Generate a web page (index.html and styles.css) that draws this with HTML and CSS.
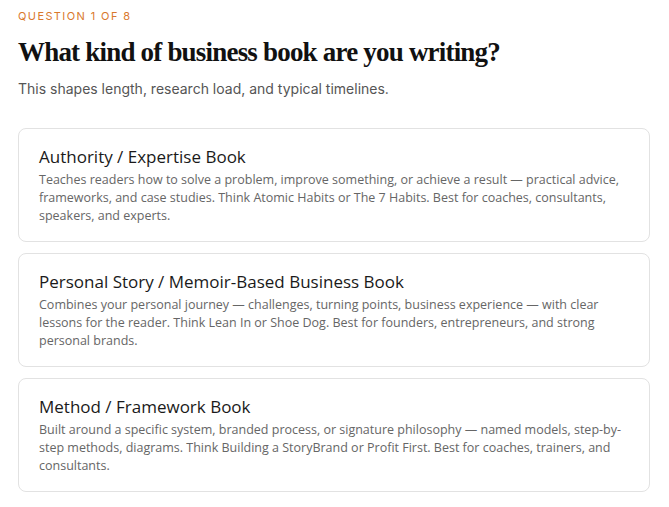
FILE: index.html
```html
<!DOCTYPE html>
<html lang="en">

<head>
  <meta charset="UTF-8">
  <meta name="viewport" content="width=device-width, initial-scale=1.0">
  <title>Business Book Questionnaire</title>
  <link rel="stylesheet" href="styles.css">
</head>

<body>
  <div class="quiz">
    <p class="step">Question 1 of 8</p>
    <h1>What kind of business book are you writing?</h1>
    <p class="hint">This shapes length, research load, and typical timelines.</p>

    <div class="options">
      <div class="option">
        <h2>Authority / Expertise Book</h2>
        <p>Teaches readers how to solve a problem, improve something, or achieve a result — practical advice, frameworks, and case studies. Think Atomic Habits or The 7 Habits. Best for coaches, consultants, speakers, and experts.</p>
      </div>
      <div class="option">
        <h2>Personal Story / Memoir-Based Business Book</h2>
        <p>Combines your personal journey — challenges, turning points, business experience — with clear lessons for the reader. Think Lean In or Shoe Dog. Best for founders, entrepreneurs, and strong personal brands.</p>
      </div>
      <div class="option">
        <h2>Method / Framework Book</h2>
        <p>Built around a specific system, branded process, or signature philosophy — named models, step-by-step methods, diagrams. Think Building a StoryBrand or Profit First. Best for coaches, trainers, and consultants.</p>
      </div>
    </div>
  </div>
</body>
</html>
```

FILE: styles.css
```css
body {
  margin: 0;
  background-color: #fff;
  font-family: 'Open Sans', sans-serif;
}

.quiz {
  padding: 9px 19px 0 18px;
}

.step {
  margin: 0;
  color: #d9782d;
  font-family: 'Inter', sans-serif;
  font-size: 11px;
  letter-spacing: 1.4px;
  text-transform: uppercase;
}

h1 {
  margin: 14px 0 0;
  color: #111;
  font-family: 'Liberation Serif', serif;
  font-size: 27px;
  font-weight: bold;
  letter-spacing: -0.8px;
}

.hint {
  margin: 12px 0 0;
  color: #555;
  font-family: 'Inter', sans-serif;
  font-size: 14px;
}

.options {
  margin-top: 31px;
  display: flex;
  flex-direction: column;
  gap: 11px;
}

.option {
  border: 1px solid #e2e2e2;
  border-radius: 8px;
  padding: 16px 20px 14px;
  height: 114px;
  box-sizing: border-box;
}

.option h2 {
  margin: 0;
  color: #1a1a1a;
  font-size: 17px;
  font-weight: normal;
  line-height: 24px;
}

.option p {
  margin: 2px 0 0;
  color: #666;
  font-size: 12.5px;
  line-height: 18px;
}
```
